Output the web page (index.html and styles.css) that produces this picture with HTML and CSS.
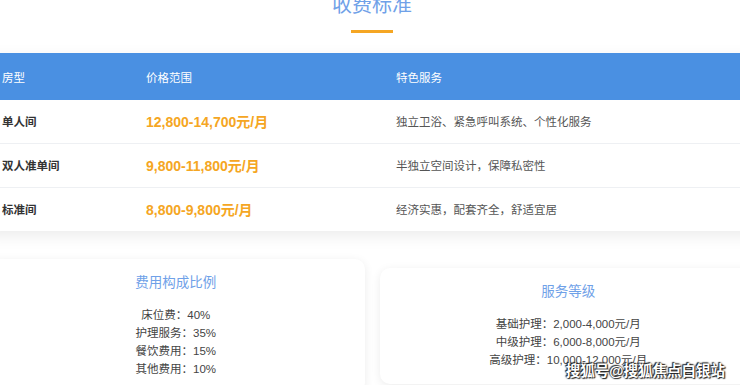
FILE: index.html
```html
<!DOCTYPE html>
<html lang="zh-CN">
<head>
    <meta charset="UTF-8">
    <meta name="viewport" content="width=device-width, initial-scale=1.0">
    <title>收费标准</title>
    <link rel="stylesheet" href="styles.css">
</head>
<body>
<div class="section">
    <h2 class="section-title">收费标准</h2>
    <div class="title-line"></div>

    <table class="price-table">
        <thead>
            <tr>
                <th class="col-type">房型</th>
                <th class="col-price">价格范围</th>
                <th>特色服务</th>
            </tr>
        </thead>
        <tbody>
            <tr>
                <td class="room">单人间</td>
                <td class="price">12,800-14,700元/月</td>
                <td>独立卫浴、紧急呼叫系统、个性化服务</td>
            </tr>
            <tr>
                <td class="room">双人准单间</td>
                <td class="price">9,800-11,800元/月</td>
                <td>半独立空间设计，保障私密性</td>
            </tr>
            <tr>
                <td class="room">标准间</td>
                <td class="price">8,800-9,800元/月</td>
                <td>经济实惠，配套齐全，舒适宜居</td>
            </tr>
        </tbody>
    </table>

    <div class="cards">
        <div class="card">
            <h3>费用构成比例</h3>
            <p>床位费：40%</p>
            <p>护理服务：35%</p>
            <p>餐饮费用：15%</p>
            <p>其他费用：10%</p>
        </div>
        <div class="card">
            <h3>服务等级</h3>
            <p>基础护理：2,000-4,000元/月</p>
            <p>中级护理：6,000-8,000元/月</p>
            <p>高级护理：10,000-12,000元/月</p>
        </div>
    </div>
</div>

<div class="watermark">搜狐号@搜狐焦点白银站</div>
</body>
</html>
```

FILE: styles.css
```css
body {
    font-family: "Liberation Sans", "Noto Sans CJK SC", sans-serif;
    margin: 0;
    padding: 0;
    background: #fff;
    color: #333;
    overflow: hidden;
}
.section {
    width: 770px;
    margin: -7px 0 0 -13px;
}
.section-title {
    margin: 0;
    font-size: 20px;
    line-height: 24px;
    font-weight: normal;
    text-align: center;
    color: #6fa1e8;
}
.title-line {
    width: 42px;
    height: 3px;
    margin: 13px auto 20px;
    background: #f5a623;
}
.price-table {
    width: 100%;
    border-collapse: collapse;
    background: white;
    box-shadow: 0 5px 15px rgba(0, 0, 0, 0.08);
    table-layout: fixed;
}
.price-table th {
    background-color: #4a90e2;
    color: white;
    font-weight: normal;
    font-size: 11.5px;
    text-align: left;
    height: 47px;
    padding: 0 15px;
}
.price-table td {
    height: 41px;
    padding: 0 15px 2px;
    font-size: 11.5px;
    color: #555;
    border-bottom: 1px solid #eef0f3;
}
.price-table tr:last-child td {
    border-bottom: none;
}
.col-type {
    width: 114px;
}
.col-price {
    width: 220px;
}
.price-table td.room {
    font-weight: bold;
    color: #333;
}
.price-table td.price {
    font-weight: bold;
    font-size: 14px;
    color: #f5a623;
}
.cards {
    display: grid;
    grid-template-columns: 1fr 1fr;
    gap: 15px;
    align-items: center;
    margin-top: 28px;
}
.card {
    background: white;
    border-radius: 10px;
    box-shadow: 0 2px 10px rgba(0, 0, 0, 0.08);
    padding: 15px 20px;
    text-align: center;
}
.card h3 {
    margin: 0 0 14px;
    font-size: 13.5px;
    line-height: 18px;
    font-weight: normal;
    color: #6fa1e8;
}
.card p {
    margin: 0;
    font-size: 11.5px;
    line-height: 18px;
    color: #444;
}
.watermark {
    position: absolute;
    right: 15px;
    bottom: 5px;
    font-size: 14.5px;
    font-weight: bold;
    color: white;
    text-shadow: 0 0 2px #222, 1px 1px 1px #222, -1px -1px 1px #222;
}
```
